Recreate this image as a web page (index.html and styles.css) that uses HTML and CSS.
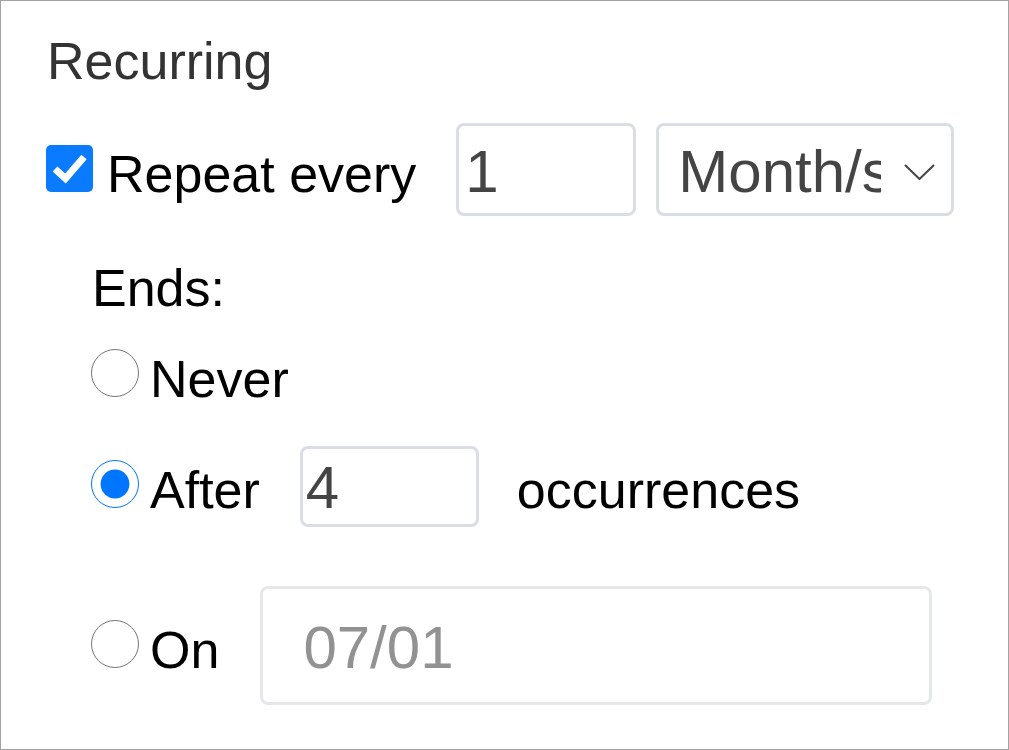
FILE: index.html
```html
<!DOCTYPE html>
<html lang="en">
<head>
<meta charset="utf-8">
<title>Recurring</title>
<link rel="stylesheet" href="styles.css">
</head>
<body>
<div class="panel">
  <h2 class="title">Recurring</h2>
  <div class="row repeat-row">
    <span class="check" role="checkbox" aria-checked="true" aria-labelledby="repeat-label">
      <svg class="check-mark" width="47" height="47" viewBox="0 0 47 47"><path d="M9 24 L19.5 33.5 L38 12" fill="none" stroke="#fff" stroke-width="7"/></svg>
    </span>
    <span class="label repeat-label" id="repeat-label">Repeat every</span>
    <input class="field field-count" type="text" value="1">
    <div class="select">
      <span class="select-value">Month/s</span>
      <svg class="chevron" width="31" height="16" viewBox="0 0 31 16"><path d="M1 1 L15.5 15 L30 1" fill="none" stroke="#444" stroke-width="2"/></svg>
    </div>
  </div>
  <div class="ends">
    <div class="label ends-title">Ends:</div>
    <div class="row never-row">
      <input class="radio" type="radio" name="ends" id="never">
      <label class="label opt-label" for="never">Never</label>
    </div>
    <div class="row after-row">
      <input class="radio" type="radio" name="ends" id="after" checked>
      <label class="label opt-label" for="after">After</label>
      <input class="field field-occ" type="text" value="4">
      <span class="label occ-label">occurrences</span>
    </div>
    <div class="row on-row">
      <input class="radio" type="radio" name="ends" id="on">
      <label class="label opt-label" for="on">On</label>
      <input class="field field-date" type="text" placeholder="07/01">
    </div>
  </div>
</div>
</body>
</html>
```

FILE: styles.css
```css
html, body {
  margin: 0;
  padding: 0;
  background: #fff;
}

body {
  font-family: "Liberation Sans", Arial, sans-serif;
}

.panel {
  box-sizing: border-box;
  width: 1009px;
  height: 750px;
  border: 1px solid #a3a3a3;
  padding: 30px 0 0 43px;
}

.title {
  margin: 0 0 0 3px;
  font-size: 52px;
  font-weight: normal;
  line-height: 60px;
  color: #333;
}

.row {
  display: flex;
  align-items: baseline;
}

.label {
  font-size: 52px;
  line-height: 60px;
  color: #000;
  white-space: nowrap;
}

.repeat-row {
  margin-top: 32px;
}

.check {
  display: block;
  flex: none;
  width: 47px;
  height: 47px;
  margin: 0 0 0 2px;
  border-radius: 5px;
  background: #0a7bff;
}

.check-mark {
  display: block;
}

.repeat-label {
  margin-left: 14px;
}

.field {
  box-sizing: border-box;
  font-family: "Liberation Sans", Arial, sans-serif;
  font-size: 60px;
  color: #444;
  border: 3px solid #dadde4;
  border-radius: 8px;
  padding: 4px 3px 0;
  margin: 0;
  background: #fff;
  outline: none;
}

.field-count {
  width: 180px;
  height: 93px;
  margin-left: 40px;
  padding-left: 6px;
}

.select {
  box-sizing: border-box;
  display: flex;
  align-items: center;
  width: 298px;
  height: 93px;
  margin-left: 20px;
  padding: 4px 16px 0 19px;
  border: 3px solid #dadde4;
  border-radius: 8px;
  font-size: 60px;
  color: #444;
}

.select-value {
  width: 203px;
  overflow: hidden;
  white-space: nowrap;
}

.chevron {
  margin-left: 23px;
  flex: none;
}

.ends {
  padding-left: 45px;
}

.ends-title {
  margin-top: 42px;
  margin-left: 3px;
}

.never-row {
  margin-top: 31px;
}

.radio {
  width: 48px;
  height: 48px;
  margin: 0 0 0 2px;
}

.opt-label {
  margin-left: 11px;
}

.after-row {
  margin-top: 37px;
}

.field-occ {
  width: 179px;
  height: 81px;
  margin-left: 40px;
  padding-top: 1px;
}

.occ-label {
  margin-left: 38px;
}

.on-row {
  margin-top: 59px;
}

.field-date {
  width: 672px;
  height: 119px;
  margin-left: 41px;
  padding: 4px 40px 0;
  border-color: #e6e7e9;
}

.field-date::placeholder {
  color: #929292;
}
```
